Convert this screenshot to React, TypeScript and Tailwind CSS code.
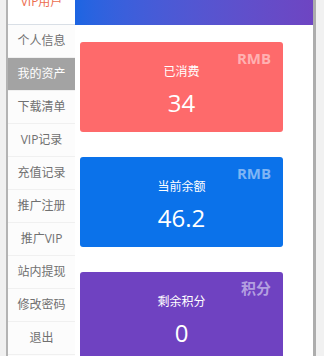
import React from "react";

const items = [
  "个人信息",
  "我的资产",
  "下载清单",
  "VIP记录",
  "充值记录",
  "推广注册",
  "推广VIP",
  "站内提现",
  "修改密码",
  "退出",
];

function Card({ bg, tag, tagColor, label, value }: { bg: string; tag: string; tagColor: string; label: string; value: string }) {
  return (
    <div className={`relative ml-[5px] w-[203px] h-[90px] rounded-[3px] ${bg} text-white flex flex-col items-center`}>
      <span className={`absolute right-[12px] top-[6px] text-[15px] leading-[20px] font-bold ${tagColor}`}>{tag}</span>
      <span className="mt-[22px] text-[12px] leading-[16px]">{label}</span>
      <span className="mt-[8px] text-[24px] leading-[30px]">{value}</span>
    </div>
  );
}

export default function App() {
  return (
    <div
      className="flex w-[324px] h-[356px] overflow-hidden bg-white"
      style={{ fontFamily: '"Open Sans","Noto Sans CJK SC",sans-serif' }}
    >
      <div className="w-[6px] bg-[#f0f0f0]" />
      <div className="w-[2px] bg-[#b3b3b3]" />
      <div className="w-[67px] flex flex-col bg-[#fcfcfc]">
        <div className="h-[25px] bg-white border-b border-[#d9dfe6] flex justify-center">
          <span className="-mt-[6px] text-[12px] leading-[16px] text-[#ec6d4e]">VIP用户</span>
        </div>
        {items.map((t) => (
          <div
            key={t}
            className={`h-[33px] shrink-0 border-b border-[#f0f0f0] flex items-center justify-center text-[12px] ${
              t === "我的资产" ? "bg-[#a3a3a3] text-white" : "text-[#707070]"
            }`}
          >
            {t}
          </div>
        ))}
      </div>
      <div className="w-[238px] flex flex-col bg-white">
        <div className="h-[25px] shrink-0 bg-gradient-to-r from-[#1c65e2] to-[#6e45c2]" />
        <div className="flex flex-col gap-[25px] pt-[17px]">
          <Card bg="bg-[#fe6a6b]" tag="RMB" tagColor="text-[#ffb1b2]" label="已消费" value="34" />
          <Card bg="bg-[#0b72ea]" tag="RMB" tagColor="text-[#7fb5f4]" label="当前余额" value="46.2" />
          <Card bg="bg-[#6f42c1]" tag="积分" tagColor="text-[#b39fe0]" label="剩余积分" value="0" />
        </div>
      </div>
      <div className="w-[3px] bg-[#adadad]" />
      <div className="w-[8px] bg-[#f1f1f1]" />
    </div>
  );
}
